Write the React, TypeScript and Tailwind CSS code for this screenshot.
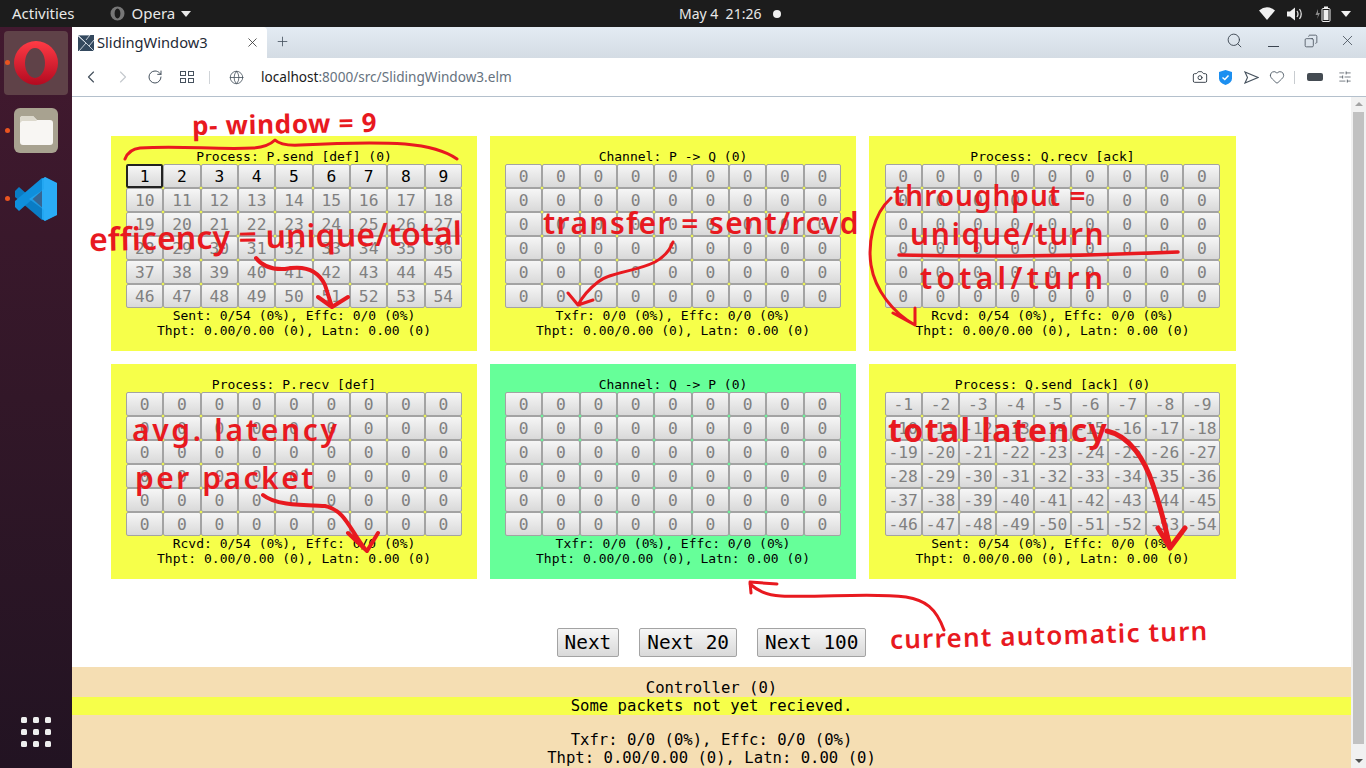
// Sliding window simulator page inside a desktop browser, with red hand notes on top
import { ChevronLeft, ChevronRight, RotateCw, Search, X, Plus, Camera, Heart, Globe, Copy, SlidersHorizontal } from 'lucide-react';

const mono = "font-['DejaVu_Sans_Mono','Liberation_Mono',monospace]";
const ui = "font-['Noto_Sans','Open_Sans',sans-serif]";

interface PanelProps {
  title: string;
  cells: (string | number)[];
  stats: string;
  active?: number;
  green?: boolean;
}

const zeros = Array.from({ length: 54 }, () => 0);
const upTo54 = Array.from({ length: 54 }, (_, i) => i + 1);
const negative = upTo54.map((n) => -n);

function Panel({ title, cells, stats, active = 0, green }: PanelProps) {
  return (
    <div className={`flex h-[215px] flex-col items-center pt-[13px] text-[13px] leading-[15px] text-black ${mono} ${green ? 'bg-[#66ff99]' : 'bg-[#f6ff4a]'}`}>
      <div>{title}</div>
      <div className="grid w-[336px] grid-cols-9">
        {cells.map((c, i) => (
          <button
            key={i}
            className={`flex h-[24px] items-center justify-center overflow-hidden rounded-[2px] bg-gradient-to-b from-[#f6f6f6] to-[#d9d9d9] text-[16.25px] ${
              i === 0 && active > 0 ? 'border-2 border-[#222222]' : 'border border-[#a3a3a3]'
            } ${i < active ? 'text-black' : 'text-[#808080]'}`}
          >
            {c}
          </button>
        ))}
      </div>
      <div className="whitespace-pre">{stats}</div>
      <div>Thpt: 0.00/0.00 (0), Latn: 0.00 (0)</div>
    </div>
  );
}

function NextButton({ label }: { label: string }) {
  return (
    <button className="flex h-[29px] items-center rounded-[2px] border border-[#a3a3a3] bg-gradient-to-b from-[#f6f6f6] to-[#d9d9d9] px-[7px] text-[19.4px] text-black">
      {label}
    </button>
  );
}

function Sidebar() {
  return (
    <div className="relative flex w-[72px] shrink-0 flex-col items-center bg-gradient-to-b from-[#42192f] via-[#321728] to-[#221322] pt-[4px]">
      <div className="flex h-[64px] w-[64px] items-center justify-center rounded-[4px] bg-[#5f4248]">
        <svg width="44" height="44" viewBox="0 0 44 44">
          <defs>
            <linearGradient id="op" x1="0" y1="0" x2="0" y2="1">
              <stop offset="0" stopColor="#ff3b45" />
              <stop offset="1" stopColor="#b30a20" />
            </linearGradient>
          </defs>
          <path fillRule="evenodd" fill="url(#op)" d="M22 0a22 22 0 1 1 0 44a22 22 0 1 1 0-44ZM21 7a10 15 0 1 0 0 30a10 15 0 1 0 0-30Z" />
        </svg>
      </div>
      <div className="mt-[13px] flex h-[45px] w-[44px] items-center justify-center rounded-[6px] bg-[#a8a290]">
        <svg width="33" height="29" viewBox="0 0 33 29">
          <path fill="#f8f6f3" d="M3 0h10l4 4h13a3 3 0 0 1 3 3v19a3 3 0 0 1-3 3H3a3 3 0 0 1-3-3V3a3 3 0 0 1 3-3Z" />
          <path fill="#dcd8cc" d="M0 7V3a3 3 0 0 1 3-3h10l4 5H2Z" />
        </svg>
      </div>
      <div className="mt-[24px]">
        <svg width="44" height="44" viewBox="0 0 44 44">
          <path fill="#0a7cc4" d="M1 14 5 10 31 33 31 42 28 43 1 20Z" />
          <path fill="#0f8fdc" d="M1 30 5 34 31 11 31 2 28 1 1 24Z" />
          <path fill="#22a7f2" d="M31 0 43 6V38L31 44 28 42V2Z" />
          <path fill="#32b2fa" d="M31 0 30 1V12L15 22 30 33V44L43 38V6Z" opacity="0.5" />
        </svg>
      </div>
      <div className="absolute left-[5px] top-[33px] h-[5px] w-[5px] rounded-full bg-[#e95420]" />
      <div className="absolute left-[5px] top-[101px] h-[5px] w-[5px] rounded-full bg-[#e95420]" />
      <div className="absolute left-[5px] top-[169px] h-[5px] w-[5px] rounded-full bg-[#e95420]" />
      <div className="absolute bottom-[21px] left-[21px] grid grid-cols-3 gap-[6px]">
        {Array.from({ length: 9 }).map((_, i) => (
          <div key={i} className="h-[6px] w-[6px] rounded-[1.5px] bg-[#eeeeee]" />
        ))}
      </div>
    </div>
  );
}

function TopBar() {
  return (
    <div className={`relative flex h-[27px] shrink-0 items-center bg-[#1c1c1c] text-[15px] text-[#e8e8e8] ${ui}`}>
      <span className="ml-[12px]">Activities</span>
      <svg className="ml-[35px]" width="15" height="15" viewBox="0 0 15 15">
        <path fillRule="evenodd" fill="#777777" d="M7.5 0.5a7 7 0 1 1 0 14 7 7 0 0 1 0-14ZM7.5 2.5C5.8 2.5 4.6 4.7 4.6 7.5s1.2 5 2.9 5 2.9-2.2 2.9-5-1.200-5-2.900-5Z" />
      </svg>
      <span className="ml-[7px]">Opera</span>
      <svg className="ml-[6px]" width="10" height="6" viewBox="0 0 10 6"><path fill="#e8e8e8" d="M0 0h10L5 6Z" /></svg>
      <span className="absolute left-[679px] text-[14px]">May 4&nbsp;&nbsp;21:26</span>
      <div className="absolute left-[773px] h-[8px] w-[8px] rounded-full bg-[#f0f0f0]" />
      <svg className="absolute left-[1259px]" width="16" height="13" viewBox="0 0 16 13"><path fill="#f0f0f0" d="M0 3.500Q8-3 16 3.500L8 13Z" /></svg>
      <svg className="absolute left-[1287px]" width="16" height="14" viewBox="0 0 16 14">
        <path fill="#f0f0f0" d="M0 4.500h3L8 0.500V13.500L3 9.500H0Z" />
        <path fill="none" stroke="#dddddd" strokeWidth="1.300" d="M10 4q2 3 0 6M12.500 2q3.500 5 0 10" />
      </svg>
      <svg className="absolute left-[1315px]" width="16" height="16" viewBox="0 0 16 16">
        <path fill="#888888" d="M3 3 0.500 9H3L2 13 5 7H3Z" />
        <rect x="7" y="2.500" width="8" height="13" rx="1" fill="#1c1c1c" stroke="#f0f0f0" />
        <rect x="9" y="0.500" width="4" height="2" fill="#f0f0f0" />
        <rect x="8.500" y="4" width="5" height="10" fill="#f0f0f0" />
      </svg>
      <svg className="absolute left-[1341px]" width="10" height="6" viewBox="0 0 10 6"><path fill="#f0f0f0" d="M0 0h10L5 6Z" /></svg>
    </div>
  );
}

function BrowserChrome() {
  return (
    <div className={`shrink-0 ${ui}`}>
      <div className="flex h-[31px] items-stretch bg-gradient-to-b from-[#e3ebf3] to-[#d4dce4]">
        <div className="flex w-[195px] items-center rounded-tr-[4px] bg-white pl-[6px] pr-[7px] text-[14.7px] text-[#1f2a36]">
          <svg width="16" height="16" viewBox="0 0 16 16">
            <rect width="16" height="16" fill="#34495e" />
            <path fill="none" stroke="#d8dfe6" strokeWidth="0.900" d="M0 0 16 16M0 1 8 8 1 16M1 0 12 0 8 5M16 5 11 11" />
          </svg>
          <span className="ml-[3px]">SlidingWindow3</span>
          <X className="ml-auto text-[#333333]" size={15} strokeWidth={1.300} />
        </div>
        <Plus className="ml-[8px] mt-[7px] text-[#44505c]" size={15} strokeWidth={1.300} />
        <div className="ml-auto flex items-center pb-[4px] text-[#3b4550]">
          <Search size={17} strokeWidth={1.300} className="mr-[25px]" />
          <div className="mt-[11px] h-[1px] w-[11px] bg-[#3b4550]" />
          <Copy size={14} strokeWidth={1.300} className="ml-[25px] -scale-x-100" />
          <X size={17} strokeWidth={1.100} className="ml-[21px] mr-[10px]" />
        </div>
      </div>
      <div className="flex h-[38px] items-center bg-white pl-[9px] text-[#46525e]">
        <ChevronLeft size={20} strokeWidth={1.400} />
        <ChevronRight size={20} strokeWidth={1.400} className="ml-[12px] text-[#c4c9ce]" />
        <RotateCw size={16} strokeWidth={1.500} className="ml-[14px]" />
        <svg className="ml-[17px]" width="14" height="12" viewBox="0 0 14 12" fill="none" stroke="#46525e">
          <rect x="0.500" y="0.500" width="5" height="4" />
          <rect x="8.500" y="0.500" width="5" height="4" />
          <rect x="0.500" y="7.500" width="5" height="4" />
          <rect x="8.500" y="7.500" width="5" height="4" />
        </svg>
        <div className="ml-[15px] h-[13px] w-[1px] bg-[#d0d4d8]" />
        <Globe size={15} strokeWidth={1.300} className="ml-[19px]" />
        <div className="ml-[17px] text-[13.6px] text-[#66727e]">
          <span className="text-[#1a1a1a]">localhost</span>:8000/src/SlidingWindow3.elm
        </div>
        <div className="ml-auto flex items-center">
          <Camera size={16} strokeWidth={1.400} className="text-[#333c46]" />
          <svg className="ml-[11px]" width="13" height="15" viewBox="0 0 13 15">
            <path fill="#1c8ff0" d="M6.500 0 13 2V8.500Q13 12.500 6.500 15 0 12.500 0 8.500V2Z" />
            <path fill="none" stroke="#ffffff" strokeWidth="1.500" d="M3.500 7.500 5.800 9.500 9.500 5.500" />
          </svg>
          <svg className="ml-[12px]" width="15" height="13" viewBox="0 0 15 13" fill="none" stroke="#46525e" strokeWidth="1.100">
            <path d="M1 1 14 6.500 1 12 3.500 6.500Z" />
          </svg>
          <Heart size={16} strokeWidth={1.300} className="ml-[10px] text-[#46525e]" />
          <div className="ml-[9px] h-[13px] w-[1px] bg-[#c8ccd0]" />
          <div className="ml-[12px] h-[8px] w-[16px] rounded-[2px] bg-[#444b52]" />
          <SlidersHorizontal size={14} strokeWidth={1.200} className="ml-[15px] mr-[14px] text-[#3f4953]" />
        </div>
      </div>
      <div className="h-[1px] bg-[#b4c0cc]" />
    </div>
  );
}

function Scrollbar() {
  return (
    <div className="flex w-[15px] shrink-0 flex-col items-center bg-[#f1f1f1] pt-[5px]">
      <svg width="8" height="4" viewBox="0 0 8 4"><path fill="#a3a3a3" d="M0 4h8L4 0Z" /></svg>
      <div className="mt-[6px] h-[632px] w-[11px] bg-[#c1c1c1]" />
      <svg className="mt-[15px]" width="8" height="4" viewBox="0 0 8 4"><path fill="#505050" d="M0 0h8L4 4Z" /></svg>
    </div>
  );
}

function Notes() {
  const note = `pointer-events-none absolute whitespace-nowrap text-[#e8191f] ${ui}`;
  return (
    <>
      <svg className="pointer-events-none absolute left-0 top-0" width="1366" height="768" fill="none" stroke="#e8191f" strokeLinecap="round" strokeLinejoin="round">
        <g strokeWidth="3">
          <path d="M125 159Q129 149 140 148C180 145 215 150 253 148Q268 147 275 140Q281 146 300 145C340 143 375 142 405 144Q440 147 457 159" />
          <path d="M673 242Q668 255 655 262C635 272 610 272 598 282Q585 292 578 305M568 293 578 305 593 300" />
          <path d="M899 255Q1040 258 1178 252" strokeWidth="3.500" />
          <path d="M891 198C872 215 868 245 871 265 875 290 893 313 915 325M893 313 915 325 915 308" />
          <path d="M944 630C936 608 925 600 906 597 870 592 820 598 781 596 765 595 757 590 750 584M777 584 750 582 751 593" />
        </g>
        <path strokeWidth="4" d="M256 258Q265 270 285 269C305 265 318 270 325 285L332 307M318 297 332 307 348 297" />
        <path strokeWidth="4" d="M263 495C275 505 300 505 325 506 345 510 350 530 365 549M348 533 367 551 378 533" />
        <path strokeWidth="5" d="M1107 431C1130 436 1145 460 1153 485 1160 505 1165 525 1170 548M1158 528 1170 548 1185 528" />
      </svg>
      <div className={`${note} left-[192px] top-[106px] origin-left -rotate-1 text-[26px] font-bold tracking-[0.700px]`}>p- window = 9</div>
      <div className={`${note} left-[89px] top-[215px] origin-left -rotate-1 text-[32px] font-semibold tracking-[0.100px]`}>efficency = unique/total</div>
      <div className={`${note} left-[543px] top-[200px] text-[30px] font-semibold tracking-[1.400px]`}>transfer = sent/rcvd</div>
      <div className={`${note} left-[893px] top-[174px] text-[28px] font-semibold tracking-[1px]`}>throughput =</div>
      <div className={`${note} left-[910px] top-[211px] text-[30px] font-semibold tracking-[1.600px]`}>unique/turn</div>
      <div className={`${note} left-[920px] top-[255px] text-[30px] font-semibold tracking-[4.300px]`}>total/turn</div>
      <div className={`${note} left-[132px] top-[407px] text-[30px] font-semibold tracking-[2.700px]`}>avg. latency</div>
      <div className={`${note} left-[135px] top-[455px] text-[30px] font-semibold tracking-[2.500px]`}>per packet</div>
      <div className={`${note} left-[888px] top-[406px] text-[32px] font-bold tracking-[1.400px]`}>total latency</div>
      <div className={`${note} left-[890px] top-[620px] origin-left -rotate-[1.6deg] text-[26px] font-semibold tracking-[1.200px]`}>current automatic turn</div>
    </>
  );
}

export default function App() {
  return (
    <div className="relative flex h-screen w-full flex-col overflow-hidden bg-white">
      <TopBar />
      <div className="flex min-h-0 flex-1">
        <Sidebar />
        <div className="flex min-w-0 flex-1 flex-col">
          <BrowserChrome />
          <div className="flex min-h-0 flex-1">
            <div className={`flex min-w-0 flex-1 flex-col overflow-hidden ${mono}`}>
              <div className="grid grid-cols-[366px_366px_367px] gap-[13px] pl-[39px] pt-[39px]">
                <Panel title="Process: P.send [def] (0)" cells={upTo54} stats="Sent: 0/54 (0%), Effc: 0/0 (0%)" active={9} />
                <Panel title="Channel: P -> Q (0)" cells={zeros} stats="Txfr: 0/0 (0%), Effc: 0/0 (0%)" />
                <Panel title="Process: Q.recv [ack]" cells={zeros} stats="Rcvd: 0/54 (0%), Effc: 0/0 (0%)" />
                <Panel title="Process: P.recv [def]" cells={zeros} stats="Rcvd: 0/54 (0%), Effc: 0/0 (0%)" />
                <Panel title="Channel: Q -> P (0)" cells={zeros} stats="Txfr: 0/0 (0%), Effc: 0/0 (0%)" green />
                <Panel title="Process: Q.send [ack] (0)" cells={negative} stats="Sent: 0/54 (0%), Effc: 0/0 (0%)" />
              </div>
              <div className="mt-[49px] flex justify-center gap-[20px]">
                <NextButton label="Next" />
                <NextButton label="Next 20" />
                <NextButton label="Next 100" />
              </div>
              <div className="mt-[10px] flex flex-1 flex-col items-center bg-[#f5deb3] pt-[12px] text-[15.600px] leading-[18px] text-black">
                <div className="h-[18px]">Controller (0)</div>
                <div className="h-[18px] w-full bg-[#f6ff4a] text-center">Some packets not yet recieved.</div>
                <div className="h-[16px]" />
                <div>Txfr: 0/0 (0%), Effc: 0/0 (0%)</div>
                <div>Thpt: 0.00/0.00 (0), Latn: 0.00 (0)</div>
              </div>
            </div>
            <Scrollbar />
          </div>
        </div>
      </div>
      <Notes />
    </div>
  );
}
